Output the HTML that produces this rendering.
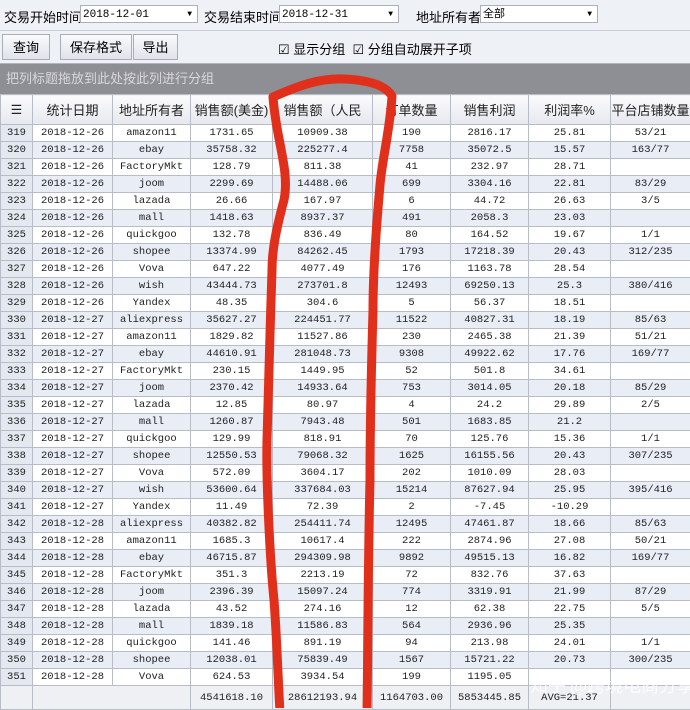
<!DOCTYPE html><html><head><meta charset="utf-8"><style>
body{margin:0;width:690px;height:708px;overflow:hidden;background:#eef0f4;font-family:"Liberation Sans","Noto Sans CJK SC",sans-serif;position:relative}
.bar1{position:absolute;left:0;top:0;width:690px;height:30px;background:#eef1f6;border-bottom:1px solid #c8ccd4;font-size:13px}
.bar1 span{position:absolute;top:7px}
.sel{position:absolute;top:5px;height:18px;background:#fff;border:1px solid #a9b0bc;font-family:"Liberation Mono",monospace;font-size:11px;line-height:18px;padding-left:2px;box-sizing:border-box}
.sel:after{content:"▼";position:absolute;right:5px;top:0;font-size:8px}
.bar2{position:absolute;left:0;top:31px;width:690px;height:32px;background:#eef1f6;border-bottom:1px solid #b0b4bc;font-size:13px}
.btn{position:absolute;top:3px;height:26px;border:1px solid #a8aeb8;background:linear-gradient(#fafbfc,#dfe3ea);line-height:25px;text-align:center;box-sizing:border-box}
.grp{position:absolute;left:0;top:64px;width:690px;height:30px;background:#8d8f94;color:#d8d8dc;font-size:13px;line-height:30px;padding-left:6px;box-sizing:border-box}
table{position:absolute;left:0;top:94px;border-collapse:collapse;table-layout:fixed;width:690px}
td,th{border:1px solid #b8bcc6;padding:0;text-align:center;white-space:nowrap;overflow:hidden}
th{height:29px;background:linear-gradient(#fbfbfc,#e6e8ee);font-weight:normal;font-size:13px;color:#222}
td{height:16px;font-family:"Liberation Mono",monospace;font-size:10.5px;color:#222;line-height:16px}
tr:nth-child(odd) td{background:#e9edf6}
tr:nth-child(even) td{background:#fff}
td:first-child{background:#e4e8f0!important}
tr.f td{height:23px;background:#eef0f4!important}
</style></head><body>
<div class="bar1"><span style="left:4px">交易开始时间</span><div class="sel" style="left:80px;width:118px">2018-12-01</div><span style="left:204px">交易结束时间</span><div class="sel" style="left:279px;width:120px">2018-12-31</div><span style="left:416px">地址所有者</span><div class="sel" style="left:480px;width:118px">全部</div></div>
<div class="bar2"><div class="btn" style="left:2px;width:48px">查询</div><div class="btn" style="left:60px;width:72px">保存格式</div><div class="btn" style="left:133px;width:45px">导出</div><span style="position:absolute;left:278px;top:8px">☑ 显示分组 &nbsp;☑ 分组自动展开子项</span></div>
<div class="grp">把列标题拖放到此处按此列进行分组</div>
<table><colgroup><col style="width:32px"><col style="width:80px"><col style="width:78px"><col style="width:82px"><col style="width:100px"><col style="width:78px"><col style="width:78px"><col style="width:82px"><col style="width:80px"></colgroup>
<tr><th>☰</th><th>统计日期</th><th>地址所有者</th><th>销售额(美金)</th><th>销售额（人民</th><th>订单数量</th><th>销售利润</th><th>利润率%</th><th>平台店铺数量</th></tr>
<tr><td>319</td><td>2018-12-26</td><td>amazon11</td><td>1731.65</td><td>10909.38</td><td>190</td><td>2816.17</td><td>25.81</td><td>53/21</td></tr>
<tr><td>320</td><td>2018-12-26</td><td>ebay</td><td>35758.32</td><td>225277.4</td><td>7758</td><td>35072.5</td><td>15.57</td><td>163/77</td></tr>
<tr><td>321</td><td>2018-12-26</td><td>FactoryMkt</td><td>128.79</td><td>811.38</td><td>41</td><td>232.97</td><td>28.71</td><td></td></tr>
<tr><td>322</td><td>2018-12-26</td><td>joom</td><td>2299.69</td><td>14488.06</td><td>699</td><td>3304.16</td><td>22.81</td><td>83/29</td></tr>
<tr><td>323</td><td>2018-12-26</td><td>lazada</td><td>26.66</td><td>167.97</td><td>6</td><td>44.72</td><td>26.63</td><td>3/5</td></tr>
<tr><td>324</td><td>2018-12-26</td><td>mall</td><td>1418.63</td><td>8937.37</td><td>491</td><td>2058.3</td><td>23.03</td><td></td></tr>
<tr><td>325</td><td>2018-12-26</td><td>quickgoo</td><td>132.78</td><td>836.49</td><td>80</td><td>164.52</td><td>19.67</td><td>1/1</td></tr>
<tr><td>326</td><td>2018-12-26</td><td>shopee</td><td>13374.99</td><td>84262.45</td><td>1793</td><td>17218.39</td><td>20.43</td><td>312/235</td></tr>
<tr><td>327</td><td>2018-12-26</td><td>Vova</td><td>647.22</td><td>4077.49</td><td>176</td><td>1163.78</td><td>28.54</td><td></td></tr>
<tr><td>328</td><td>2018-12-26</td><td>wish</td><td>43444.73</td><td>273701.8</td><td>12493</td><td>69250.13</td><td>25.3</td><td>380/416</td></tr>
<tr><td>329</td><td>2018-12-26</td><td>Yandex</td><td>48.35</td><td>304.6</td><td>5</td><td>56.37</td><td>18.51</td><td></td></tr>
<tr><td>330</td><td>2018-12-27</td><td>aliexpress</td><td>35627.27</td><td>224451.77</td><td>11522</td><td>40827.31</td><td>18.19</td><td>85/63</td></tr>
<tr><td>331</td><td>2018-12-27</td><td>amazon11</td><td>1829.82</td><td>11527.86</td><td>230</td><td>2465.38</td><td>21.39</td><td>51/21</td></tr>
<tr><td>332</td><td>2018-12-27</td><td>ebay</td><td>44610.91</td><td>281048.73</td><td>9308</td><td>49922.62</td><td>17.76</td><td>169/77</td></tr>
<tr><td>333</td><td>2018-12-27</td><td>FactoryMkt</td><td>230.15</td><td>1449.95</td><td>52</td><td>501.8</td><td>34.61</td><td></td></tr>
<tr><td>334</td><td>2018-12-27</td><td>joom</td><td>2370.42</td><td>14933.64</td><td>753</td><td>3014.05</td><td>20.18</td><td>85/29</td></tr>
<tr><td>335</td><td>2018-12-27</td><td>lazada</td><td>12.85</td><td>80.97</td><td>4</td><td>24.2</td><td>29.89</td><td>2/5</td></tr>
<tr><td>336</td><td>2018-12-27</td><td>mall</td><td>1260.87</td><td>7943.48</td><td>501</td><td>1683.85</td><td>21.2</td><td></td></tr>
<tr><td>337</td><td>2018-12-27</td><td>quickgoo</td><td>129.99</td><td>818.91</td><td>70</td><td>125.76</td><td>15.36</td><td>1/1</td></tr>
<tr><td>338</td><td>2018-12-27</td><td>shopee</td><td>12550.53</td><td>79068.32</td><td>1625</td><td>16155.56</td><td>20.43</td><td>307/235</td></tr>
<tr><td>339</td><td>2018-12-27</td><td>Vova</td><td>572.09</td><td>3604.17</td><td>202</td><td>1010.09</td><td>28.03</td><td></td></tr>
<tr><td>340</td><td>2018-12-27</td><td>wish</td><td>53600.64</td><td>337684.03</td><td>15214</td><td>87627.94</td><td>25.95</td><td>395/416</td></tr>
<tr><td>341</td><td>2018-12-27</td><td>Yandex</td><td>11.49</td><td>72.39</td><td>2</td><td>-7.45</td><td>-10.29</td><td></td></tr>
<tr><td>342</td><td>2018-12-28</td><td>aliexpress</td><td>40382.82</td><td>254411.74</td><td>12495</td><td>47461.87</td><td>18.66</td><td>85/63</td></tr>
<tr><td>343</td><td>2018-12-28</td><td>amazon11</td><td>1685.3</td><td>10617.4</td><td>222</td><td>2874.96</td><td>27.08</td><td>50/21</td></tr>
<tr><td>344</td><td>2018-12-28</td><td>ebay</td><td>46715.87</td><td>294309.98</td><td>9892</td><td>49515.13</td><td>16.82</td><td>169/77</td></tr>
<tr><td>345</td><td>2018-12-28</td><td>FactoryMkt</td><td>351.3</td><td>2213.19</td><td>72</td><td>832.76</td><td>37.63</td><td></td></tr>
<tr><td>346</td><td>2018-12-28</td><td>joom</td><td>2396.39</td><td>15097.24</td><td>774</td><td>3319.91</td><td>21.99</td><td>87/29</td></tr>
<tr><td>347</td><td>2018-12-28</td><td>lazada</td><td>43.52</td><td>274.16</td><td>12</td><td>62.38</td><td>22.75</td><td>5/5</td></tr>
<tr><td>348</td><td>2018-12-28</td><td>mall</td><td>1839.18</td><td>11586.83</td><td>564</td><td>2936.96</td><td>25.35</td><td></td></tr>
<tr><td>349</td><td>2018-12-28</td><td>quickgoo</td><td>141.46</td><td>891.19</td><td>94</td><td>213.98</td><td>24.01</td><td>1/1</td></tr>
<tr><td>350</td><td>2018-12-28</td><td>shopee</td><td>12038.01</td><td>75839.49</td><td>1567</td><td>15721.22</td><td>20.73</td><td>300/235</td></tr>
<tr><td>351</td><td>2018-12-28</td><td>Vova</td><td>624.53</td><td>3934.54</td><td>199</td><td>1195.05</td><td></td><td></td></tr>
<tr class="f"><td></td><td colspan="2"></td><td>4541618.10</td><td>28612193.94</td><td>1164703.00</td><td>5853445.85</td><td>AVG=21.37</td><td></td></tr>
</table>
<svg style="position:absolute;left:0;top:0" width="690" height="708"><g fill="none" stroke="#e0301c" stroke-width="9" stroke-linecap="round" stroke-linejoin="round">
<path d="M273 97 C 276 140 290 170 284 200 C 276 230 272 250 272 270 C 270 330 268 400 267 440 C 266 480 270 560 274 600 C 277 640 278 680 280 712"/>
<path d="M273 97 C 300 85 320 78 345 79 C 365 80 385 84 392 96 C 390 130 382 160 380 185 C 376 230 373 280 373 310 C 371 380 370 440 370 480 C 368 560 368 640 367 712"/>
</g>
<text x="530" y="692" font-size="18" fill="#ffffff" fill-opacity="0.8" font-family="Noto Sans CJK SC,sans-serif">知乎 @跨境电商分享</text></svg>
</body></html>
